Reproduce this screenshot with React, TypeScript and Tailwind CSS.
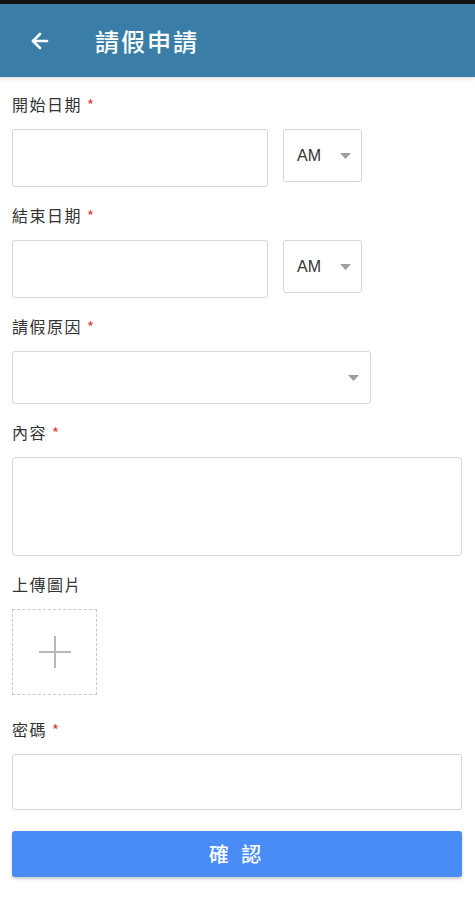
import { ArrowLeft } from "lucide-react";

const font = { fontFamily: '"Noto Sans CJK TC", "Noto Sans", sans-serif' };

function Label({ text, required = true, className = "" }: { text: string; required?: boolean; className?: string }) {
  return (
    <div className={"h-[22px] flex items-center text-[16px] text-[#333] leading-none " + className}>
      <span className="tracking-[1.5px]">{text}</span>
      {required && <span className="ml-[5px] text-[#e53935] text-[15px]">*</span>}
    </div>
  );
}

function Caret() {
  return (
    <svg width="11" height="6" viewBox="0 0 11 6">
      <path d="M0 0 L11 0 L5.5 6 Z" fill="#9e9e9e" />
    </svg>
  );
}

function DateRow({ label, className = "" }: { label: string; className?: string }) {
  return (
    <div className={className}>
      <Label text={label} />
      <div className="mt-[14px] flex items-start gap-[15px] h-[58px]">
        <div className="w-[256px] h-[58px] border border-[#d6d6d6] rounded-[3px] bg-white" />
        <div className="w-[79px] h-[53px] border border-[#d6d6d6] rounded-[3px] bg-white flex items-center pl-[13px] pr-[10px] justify-between">
          <span className="text-[16px] text-[#333]" style={{ fontFamily: '"Liberation Sans", "Noto Sans CJK TC", sans-serif' }}>AM</span>
          <Caret />
        </div>
      </div>
    </div>
  );
}

export default function App() {
  return (
    <div className="w-[475px] h-[900px] bg-white overflow-hidden" style={font}>
      <div className="h-[4px] bg-[#111]" />
      <header className="h-[73px] bg-[#3a7ea7] flex items-center shadow-[0_2px_3px_rgba(0,0,0,0.12)] relative">
        <ArrowLeft className="ml-[28px] text-white" size={24} strokeWidth={2.6} />
        <h1 className="ml-[43px] text-white text-[24px] font-medium tracking-[2px]">請假申請</h1>
      </header>

      <main className="px-[12px] pt-[16px]">
        <DateRow label="開始日期" />
        <DateRow label="結束日期" className="mt-[17px]" />

        <div className="mt-[17px]">
          <Label text="請假原因" />
          <div className="mt-[14px] w-[359px] h-[53px] border border-[#d6d6d6] rounded-[3px] flex items-center justify-end pr-[11px]">
            <Caret />
          </div>
        </div>

        <div className="mt-[17px]">
          <Label text="內容" />
          <div className="mt-[14px] w-[450px] h-[99px] border border-[#d6d6d6] rounded-[4px]" />
        </div>

        <div className="mt-[17px]">
          <Label text="上傳圖片" required={false} />
          <div className="mt-[14px] w-[85px] h-[86px] border border-dashed border-[#c8c8c8] flex items-center justify-center">
            <svg width="34" height="34" viewBox="0 0 34 34">
              <path d="M17 1 V33 M1 17 H33" stroke="#b8b8b8" strokeWidth="2" />
            </svg>
          </div>
        </div>

        <div className="mt-[23px]">
          <Label text="密碼" />
          <div className="mt-[14px] w-[450px] h-[56px] border border-[#d6d6d6] rounded-[3px]" />
        </div>

        <button className="mt-[21px] w-[450px] h-[46px] bg-[#4a8cf6] rounded-[3px] shadow-[0_2px_3px_rgba(0,0,0,0.2)] text-white text-[20px] font-medium tracking-[4px] flex items-center justify-center">
          確 認
        </button>
      </main>
    </div>
  );
}
